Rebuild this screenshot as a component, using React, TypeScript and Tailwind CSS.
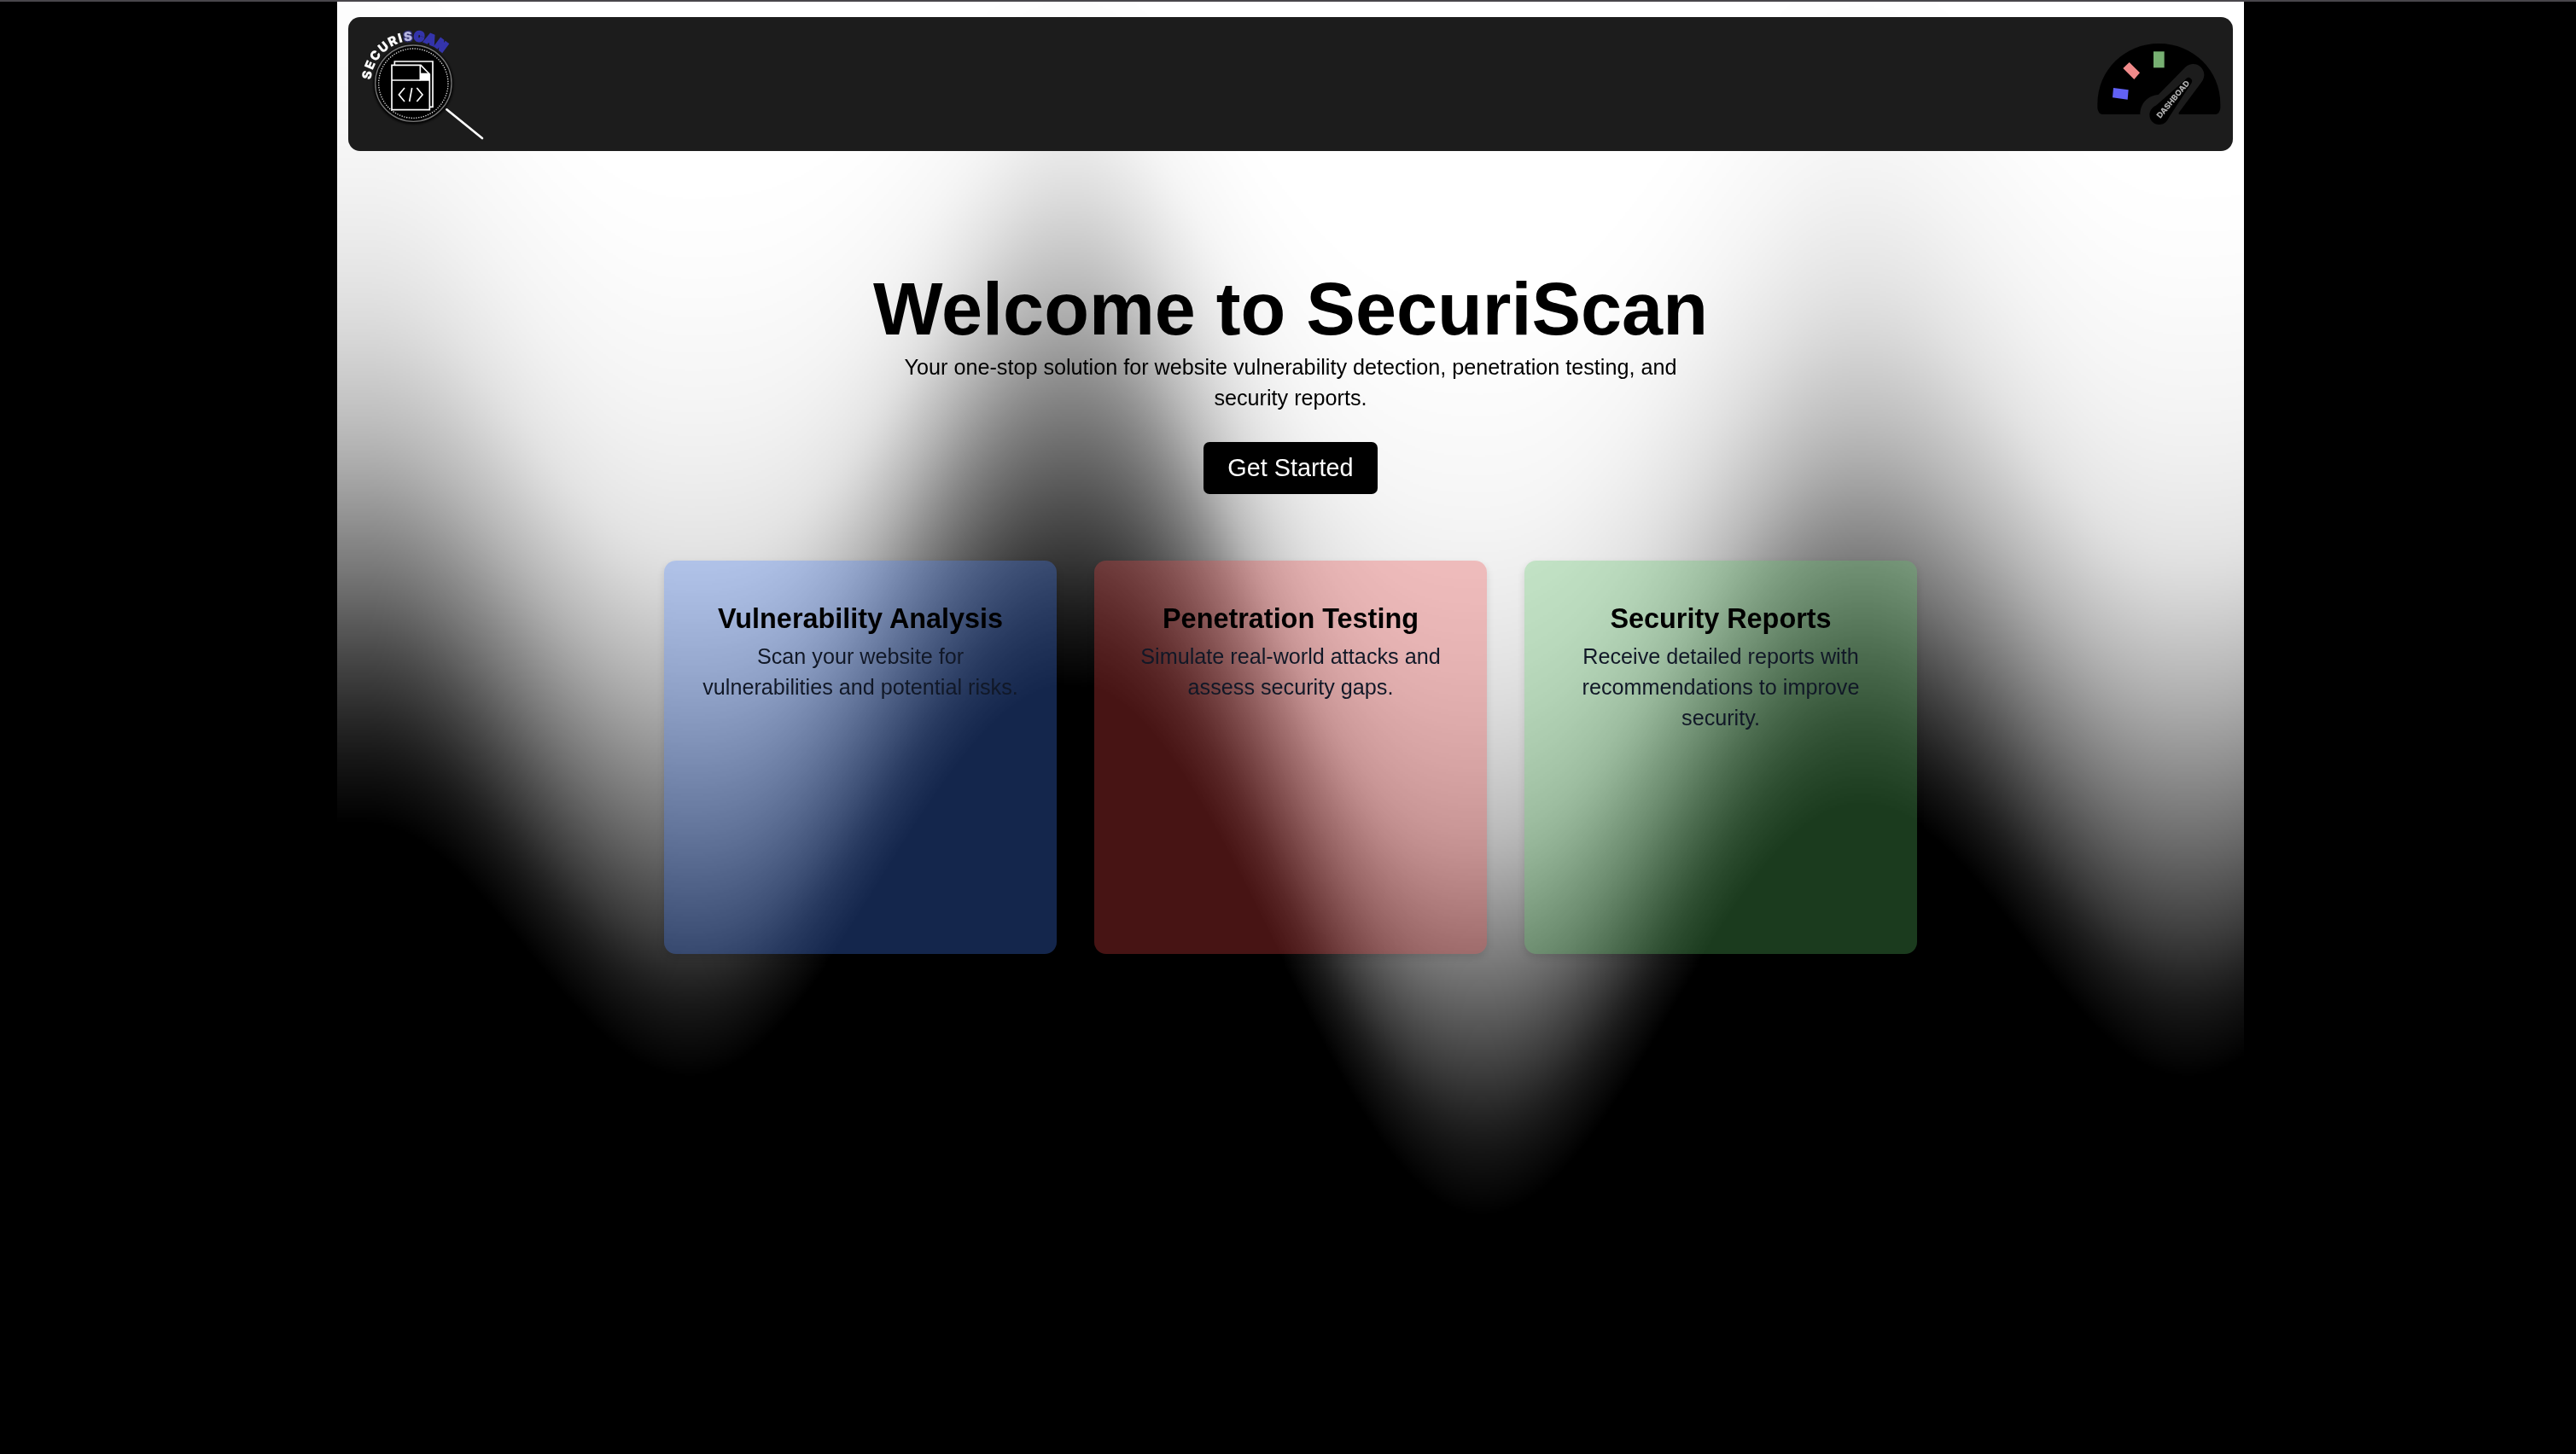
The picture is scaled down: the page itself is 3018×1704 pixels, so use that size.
import { useLayoutEffect, useRef } from "react";

const LEVELS = [0, 0.1, 0.25, 0.5, 0.75, 0.9, 0.97, 1];

// Each entry: x of a crest or trough, the y at which every level is reached,
// and how sharply the bright levels pinch towards the trough after it.
const COLUMNS: [number, number[], number][] = [
  [30, [963, 878, 785, 648, 485, 316, 140, -80], 0.12],
  [412, [1260, 1173, 1088, 938, 768, 625, 415, 180], 0.4],
  [860, [803, 723, 630, 476, 320, 190, 90, -60], 0.4],
  [1340, [1422, 1333, 1248, 1113, 958, 758, 558, 300], 0.12],
  [1785, [943, 868, 780, 648, 485, 316, 140, -80], 0.12],
  [2167, [1260, 1173, 1088, 938, 768, 625, 415, 180], 0.4],
  [2615, [803, 723, 630, 476, 320, 190, 90, -60], 0.4],
];

function contour(x: number): number[] {
  if (x <= COLUMNS[0][0]) return COLUMNS[0][1];
  let i = 0;
  while (i < COLUMNS.length - 2 && x > COLUMNS[i + 1][0]) i++;
  const [x0, a, pinch] = COLUMNS[i];
  const [x1, b] = COLUMNS[i + 1];
  const f = (1 - Math.cos((Math.PI * (x - x0)) / (x1 - x0))) / 2;
  return a.map((v, k) => {
    const q = 1 + pinch * LEVELS[k];
    const g = b[k] > v ? 1 - Math.pow(1 - f, q) : Math.pow(f, q);
    return v + (b[k] - v) * g;
  });
}

// Monotone cubic interpolation of brightness down one column.
function tangents(ys: number[]): number[] {
  const n = ys.length;
  const d: number[] = [];
  for (let k = 0; k < n - 1; k++) d.push((LEVELS[k + 1] - LEVELS[k]) / (ys[k] - ys[k + 1]));
  const m = new Array<number>(n).fill(0);
  m[0] = d[0];
  for (let k = 1; k < n - 1; k++) m[k] = (2 * d[k - 1] * d[k]) / (d[k - 1] + d[k]);
  return m;
}

function Aurora() {
  const ref = useRef<HTMLCanvasElement>(null);
  useLayoutEffect(() => {
    const canvas = ref.current!;
    const ctx = canvas.getContext("2d")!;
    const { width, height } = canvas;
    const img = ctx.createImageData(width, height);
    for (let px = 0; px < width; px++) {
      const ys = contour(px * 2);
      const m = tangents(ys);
      for (let py = 0; py < height; py++) {
        const y = py * 2;
        let v = 0;
        if (y <= ys[7]) v = 1;
        else if (y < ys[0]) {
          let k = 0;
          while (y < ys[k + 1]) k++;
          const h = ys[k] - ys[k + 1];
          const t = (ys[k] - y) / h;
          const t2 = t * t;
          const t3 = t2 * t;
          v =
            (2 * t3 - 3 * t2 + 1) * LEVELS[k] +
            (t3 - 2 * t2 + t) * h * m[k] +
            (3 * t2 - 2 * t3) * LEVELS[k + 1] +
            (t3 - t2) * h * m[k + 1];
        }
        const o = (py * width + px) * 4;
        img.data[o] = img.data[o + 1] = img.data[o + 2] = Math.round(v * 255);
        img.data[o + 3] = 255;
      }
    }
    ctx.putImageData(img, 0, 0);
  }, []);
  return <canvas ref={ref} width={1117} height={851} className="absolute inset-0 h-full w-full" />;
}

function Logo() {
  return (
    <svg className="h-[157px] w-[160px]" viewBox="69 60 480 471" fill="none">
      <defs>
        <path id="ring" d="M148 293a150 150 0 0 1 300 0" />
        <filter id="soft" x="-20%" y="-20%" width="140%" height="140%">
          <feGaussianBlur stdDeviation="4" />
        </filter>
      </defs>
      <circle cx="298" cy="296" r="140" fill="#000" filter="url(#soft)" />
      <circle cx="298" cy="293" r="134" fill="#000" stroke="#777" strokeWidth="4" />
      <circle cx="298" cy="293" r="122" stroke="#ddd" strokeWidth="4" strokeDasharray="4 4.5" />
      <g stroke="#fff" strokeWidth="5">
        <path d="M232 228v-12h134v160h-11" />
        <path d="M222 229h102l31 32v125H222zM222 282h100" />
        <path d="M322 229v53h33" />
        <path d="M322 257h33v25h-33z" fill="#fff" stroke="none" />
        <path d="M267 309l-20 24 20 24M310 309l20 24-20 24M293 309l-9 48" />
      </g>
      <path d="M415 385L540 486" stroke="#fff" strokeWidth="8" strokeLinecap="round" />
      <text fontFamily="Inter, sans-serif" fontWeight="900" fontSize="45" letterSpacing="4" fill="#fff">
        <textPath href="#ring" startOffset="12">
          <tspan>SECURI</tspan>
          <tspan fill="#b4b4e0" stroke="#3636b0" strokeOpacity="0.5" strokeWidth="8" paintOrder="stroke">S</tspan>
          <tspan fill="#3434ab" stroke="#3434ab" strokeWidth="8">CAN</tspan>
        </textPath>
      </text>
    </svg>
  );
}

function Gauge() {
  return (
    <svg className="h-[157px] w-[160px]" viewBox="78 60 480 471">
      <path
        d="M98 402Q84 398 82 380V366C82 246 178 153 298 153S514 246 514 366V380Q512 398 498 402Z"
        fill="#000"
      />
      <path
        d="M232 404C232 364 258 336 296 333L391 236C408 220 434 222 447 238C460 253 460 272 449 287L368 396V404Z"
        fill="#1c1c1c"
      />
      <circle cx="299" cy="404" r="34" fill="#000" />
      <path d="M299 404L402 285" stroke="#000" strokeWidth="24" strokeLinecap="round" />
      <path d="M272 385L392 280L413 291L328 421Z" fill="#000" />
      <rect x="279" y="181" width="38" height="57" fill="#77b072" />
      <path d="M194 219L231 256L211 279L172 240Z" fill="#f08a8a" />
      <path d="M138 309L191 316L188 350L135 343Z" fill="#6161f5" />
      <text
        transform="translate(303 418) rotate(-50)"
        fontFamily="Inter, sans-serif"
        fontWeight="800"
        fontSize="28"
        textLength="163"
        lengthAdjust="spacingAndGlyphs"
        fill="#b0b0b0"
      >
        DASHBOAD
      </text>
    </svg>
  );
}

const CARDS = [
  { title: "Vulnerability Analysis", text: "Scan your website for vulnerabilities and potential risks.", tone: "bg-[rgba(67,125,252,0.3)]" },
  { title: "Penetration Testing", text: "Simulate real-world attacks and assess security gaps.", tone: "bg-[rgba(235,66,66,0.3)]" },
  { title: "Security Reports", text: "Receive detailed reports with recommendations to improve security.", tone: "bg-[rgba(90,197,100,0.3)]" },
];

export default function App() {
  return (
    <div className="flex h-[1704px] w-[3018px] flex-col overflow-hidden bg-black font-['Liberation_Sans',Arial,sans-serif]">
      <div className="h-[2px] shrink-0 bg-[#48464b]" />
      <div className="relative ml-[395px] w-[2234px] flex-1">
        <Aurora />
        <div className="relative flex flex-col items-center">
          <header className="mt-[18px] mr-[1px] flex h-[157px] w-[2208px] justify-between rounded-[14px] bg-[#1c1c1c]">
            <Logo />
            <Gauge />
          </header>
          <main className="mt-[137px] flex flex-col items-center text-center text-black">
            <h1 className="text-[86.4px] leading-[96px] font-bold whitespace-nowrap">Welcome to SecuriScan</h1>
            <p className="mt-[2px] w-[960px] text-[25.2px] leading-[36px]">
              Your one-stop solution for website vulnerability detection, penetration testing, and security reports.
            </p>
            <button className="mt-[34px] h-[61px] w-[204px] rounded-[7px] bg-black text-[28.8px] text-white">
              Get Started
            </button>
            <section className="mt-[78px] flex gap-[44px]">
              {CARDS.map((c) => (
                <article
                  key={c.title}
                  className={`h-[461px] w-[460px] rounded-[14px] px-[36px] pt-[46px] shadow-[0_4px_10px_rgba(0,0,0,0.12)] ${c.tone}`}
                >
                  <h2 className="text-[32.4px] leading-[44px] font-bold">{c.title}</h2>
                  <p className="mt-[4px] text-[25.2px] leading-[36px] text-[#111827]">{c.text}</p>
                </article>
              ))}
            </section>
          </main>
        </div>
      </div>
    </div>
  );
}
